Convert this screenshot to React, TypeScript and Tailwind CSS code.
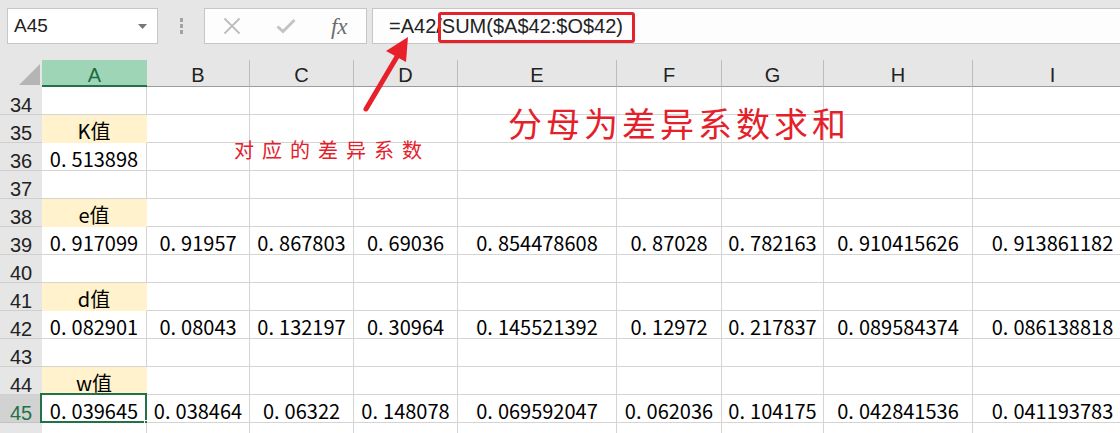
import React from 'react';

const colW = ['w-[105px]', 'w-[103px]', 'w-[104px]', 'w-[104px]', 'w-[159px]', 'w-[105px]', 'w-[102px]', 'w-[149px]', 'w-[160px]'];
const letters = ['A', 'B', 'C', 'D', 'E', 'F', 'G', 'H', 'I'];

type Row = { n: number; label?: string; vals?: string[] };

const rows: Row[] = [
  { n: 34 },
  { n: 35, label: 'K值' },
  { n: 36, vals: ['0.513898'] },
  { n: 37 },
  { n: 38, label: 'e值' },
  { n: 39, vals: ['0.917099', '0.91957', '0.867803', '0.69036', '0.854478608', '0.87028', '0.782163', '0.910415626', '0.913861182'] },
  { n: 40 },
  { n: 41, label: 'd值' },
  { n: 42, vals: ['0.082901', '0.08043', '0.132197', '0.30964', '0.145521392', '0.12972', '0.217837', '0.089584374', '0.086138818'] },
  { n: 43 },
  { n: 44, label: 'w值' },
  { n: 45, vals: ['0.039645', '0.038464', '0.06322', '0.148078', '0.069592047', '0.062036', '0.104175', '0.042841536', '0.041193783'] },
  { n: 46 },
];

function Num({ v }: { v: string }) {
  const [a, b] = v.split('.');
  return (
    <span>
      {a}
      <span className="mr-[5px]">.</span>
      {b}
    </span>
  );
}

export default function App() {
  return (
    <div className="relative w-[1120px] h-[433px] overflow-hidden bg-[#e6e6e6] font-['Liberation_Sans',Arial,sans-serif] text-[#222]">
      {/* toolbar */}
      <div className="flex h-[60px] items-start pt-2">
        <div className="ml-[7px] w-[151px] h-9 bg-white border border-[#c6c6c6] flex items-center justify-between pl-[6px] pr-[10px]">
          <span className="text-[19px]">A45</span>
          <svg width="9" height="5" viewBox="0 0 9 5">
            <path d="M0 0 L9 0 L4.5 5 Z" fill="#777" />
          </svg>
        </div>
        <div className="w-[46px] h-9 flex flex-col items-center justify-center gap-[2px]">
          <div className="w-[3px] h-[4px] bg-[#a3a3a3]" />
          <div className="w-[3px] h-[4px] bg-[#a3a3a3]" />
          <div className="w-[3px] h-[4px] bg-[#a3a3a3]" />
        </div>
        <div className="w-[163px] h-9 bg-[#fdfdfd] border border-[#c6c6c6] flex items-center">
          <div className="w-[54px] flex justify-center">
            <svg width="18" height="18" viewBox="0 0 18 18">
              <path d="M1.5 1.5 L16.5 16.5 M16.5 1.5 L1.5 16.5" stroke="#bdbdbd" strokeWidth="1.8" />
            </svg>
          </div>
          <div className="w-[54px] flex justify-center">
            <svg width="20" height="16" viewBox="0 0 20 16">
              <path d="M1.5 8.5 L7 13.5 L18.5 2" stroke="#c4c4c4" strokeWidth="3" fill="none" />
            </svg>
          </div>
          <div className="w-[54px] flex justify-center">
            <span className="font-['Liberation_Serif',serif] italic text-[23px] text-[#6c6c6c] leading-none">fx</span>
          </div>
        </div>
        <div className="relative ml-[5px] flex-1 h-9 bg-[#fdfdfd] border border-[#c6c6c6] border-r-0 flex items-center pl-4">
          <span className="text-[20px]">=A42/SUM($A$42:$O$42)</span>
          <div className="absolute left-[65px] top-[3px] w-[197px] h-[31px] border-[3px] border-[#e5232b] rounded-[3px]" />
        </div>
      </div>

      {/* column headers */}
      <div className="flex h-[27px]">
        <div className="relative w-[42px] shrink-0">
          <svg className="absolute left-[19px] top-[4px]" width="21" height="21" viewBox="0 0 21 21">
            <path d="M0 21 L21 0 L21 21 Z" fill="#b5b5b5" />
          </svg>
        </div>
        {letters.map((l, i) =>
          i === 0 ? (
            <div
              key={l}
              className={`${colW[i]} shrink-0 bg-[#9fd5b7] border-b-2 border-[#217346] flex items-center justify-center pt-1 text-[20px] text-[#1d6b41]`}
            >
              {l}
            </div>
          ) : (
            <div
              key={l}
              className={`${colW[i]} shrink-0 border-r border-r-[#bcbcbc] border-b border-b-[#9b9b9b] flex items-center justify-center pt-1 text-[20px] text-[#222]`}
            >
              {l}
            </div>
          )
        )}
      </div>

      {/* rows */}
      <div className="font-['Noto_Sans_CJK_SC','Noto_Sans',sans-serif] text-black">
        {rows.map((r) => {
          const sel = r.n === 45;
          return (
            <div key={r.n} className="flex h-[28px]">
              <div
                className={
                  sel
                    ? "w-[42px] shrink-0 bg-[#d2d2d2] border-b border-[#c4c4c4] flex items-center justify-center pt-2 text-[20px] text-[#217346] font-['Liberation_Sans',Arial,sans-serif]"
                    : "w-[42px] shrink-0 bg-[#e6e6e6] border-b border-[#cfcfcf] flex items-center justify-center pt-2 text-[20px] text-[#222] font-['Liberation_Sans',Arial,sans-serif]"
                }
              >
                {r.n}
              </div>
              {colW.map((w, i) => {
                if (i === 0 && r.label) {
                  return (
                    <div key={i} className={`${w} shrink-0 bg-[#fff2cc] border-r border-b border-[#fff2cc] flex items-center justify-center pt-1 text-[20px]`}>
                      {r.label}
                    </div>
                  );
                }
                const v = r.vals?.[i];
                return (
                  <div
                    key={i}
                    className={`${w} relative shrink-0 bg-white border-r border-b border-[#d4d4d4] flex items-center justify-center pt-1 text-[20px] whitespace-nowrap`}
                  >
                    {v && <Num v={v} />}
                    {sel && i === 0 && (
                      <>
                        <div className="absolute left-[-2px] top-[-2px] right-[-1px] bottom-[-1px] border-2 border-[#217346]" />
                        <div className="absolute right-[-4px] bottom-[-4px] w-[6px] h-[6px] bg-[#217346] border border-white" />
                      </>
                    )}
                  </div>
                );
              })}
            </div>
          );
        })}
      </div>

      {/* annotations */}
      <div className="absolute left-[234px] top-[140px] text-[20px] leading-none tracking-[8px] text-[#e4202a] font-['Noto_Sans_CJK_SC',sans-serif]">
        对应的差异系数
      </div>
      <div className="absolute left-[508px] top-[106px] text-[34px] leading-none tracking-[4px] text-[#e4202a] font-['Noto_Sans_CJK_SC',sans-serif]">
        分母为差异系数求和
      </div>
      <svg className="absolute left-0 top-0 pointer-events-none" width="1120" height="433" viewBox="0 0 1120 433">
        <path d="M366 109 L398 55" stroke="#e8202a" strokeWidth="5" strokeLinecap="round" />
        <path d="M408 37 L386 51 L406 62 Z" fill="#e8202a" />
      </svg>
    </div>
  );
}
